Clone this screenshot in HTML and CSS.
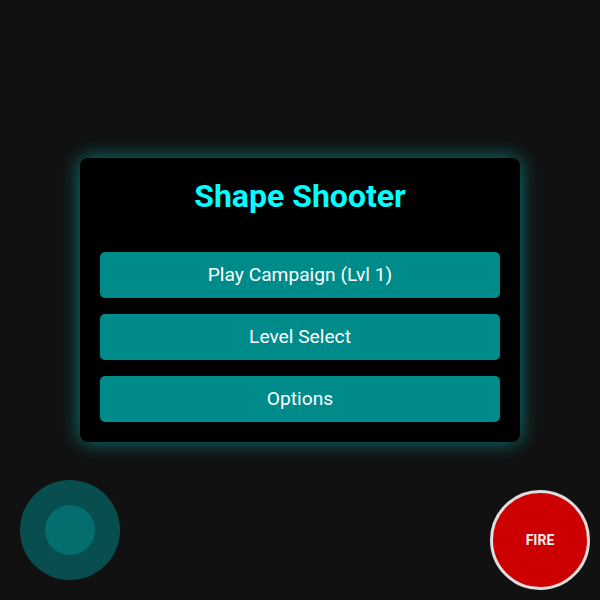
FILE: index.html
```html
<!DOCTYPE html>
<html>
<head>
<meta charset="utf-8">
<link rel="stylesheet" href="styles.css">
</head>
<body>
<div class="screen">
  <div class="menu">
    <h1 class="title">Shape Shooter</h1>
    <button class="btn">Play Campaign (Lvl 1)</button>
    <button class="btn">Level Select</button>
    <button class="btn">Options</button>
  </div>
  <div class="joystick"><div class="knob"></div></div>
  <div class="fire">FIRE</div>
</div>
</body>
</html>
```
FILE: styles.css
```css
html, body {
  margin: 0;
  padding: 0;
  background: #111111;
}
.screen {
  position: relative;
  width: 600px;
  height: 600px;
  display: flex;
  align-items: center;
  justify-content: center;
  font-family: Roboto, "Liberation Sans", sans-serif;
}
.menu {
  width: 400px;
  padding: 20px;
  margin-top: -1px;
  background: #000;
  border-radius: 8px;
  box-shadow: 0 0 20px rgba(0, 255, 255, 0.45);
  display: flex;
  flex-direction: column;
  gap: 16px;
}
.title {
  margin: 0 0 21px 0;
  text-align: center;
  color: #00ffff;
  font-size: 32px;
  font-weight: 700;
  line-height: 37px;
}
.btn {
  height: 46px;
  border: none;
  border-radius: 5px;
  background: #008b8b;
  color: #ffffff;
  font-family: Roboto, "Liberation Sans", sans-serif;
  font-size: 19.2px;
  padding: 0;
}
.joystick {
  position: absolute;
  left: 20px;
  top: 480px;
  width: 100px;
  height: 100px;
  border-radius: 50%;
  background: rgba(0, 139, 139, 0.5);
  display: flex;
  align-items: center;
  justify-content: center;
}
.knob {
  width: 50px;
  height: 50px;
  border-radius: 50%;
  background: rgba(0, 139, 139, 0.5);
}
.fire {
  position: absolute;
  left: 490px;
  top: 490px;
  width: 94px;
  height: 94px;
  border-radius: 50%;
  border: 3px solid #dddddd;
  background: #cc0000;
  color: #eeeeee;
  font-weight: 700;
  font-size: 14px;
  display: flex;
  align-items: center;
  justify-content: center;
}
```
